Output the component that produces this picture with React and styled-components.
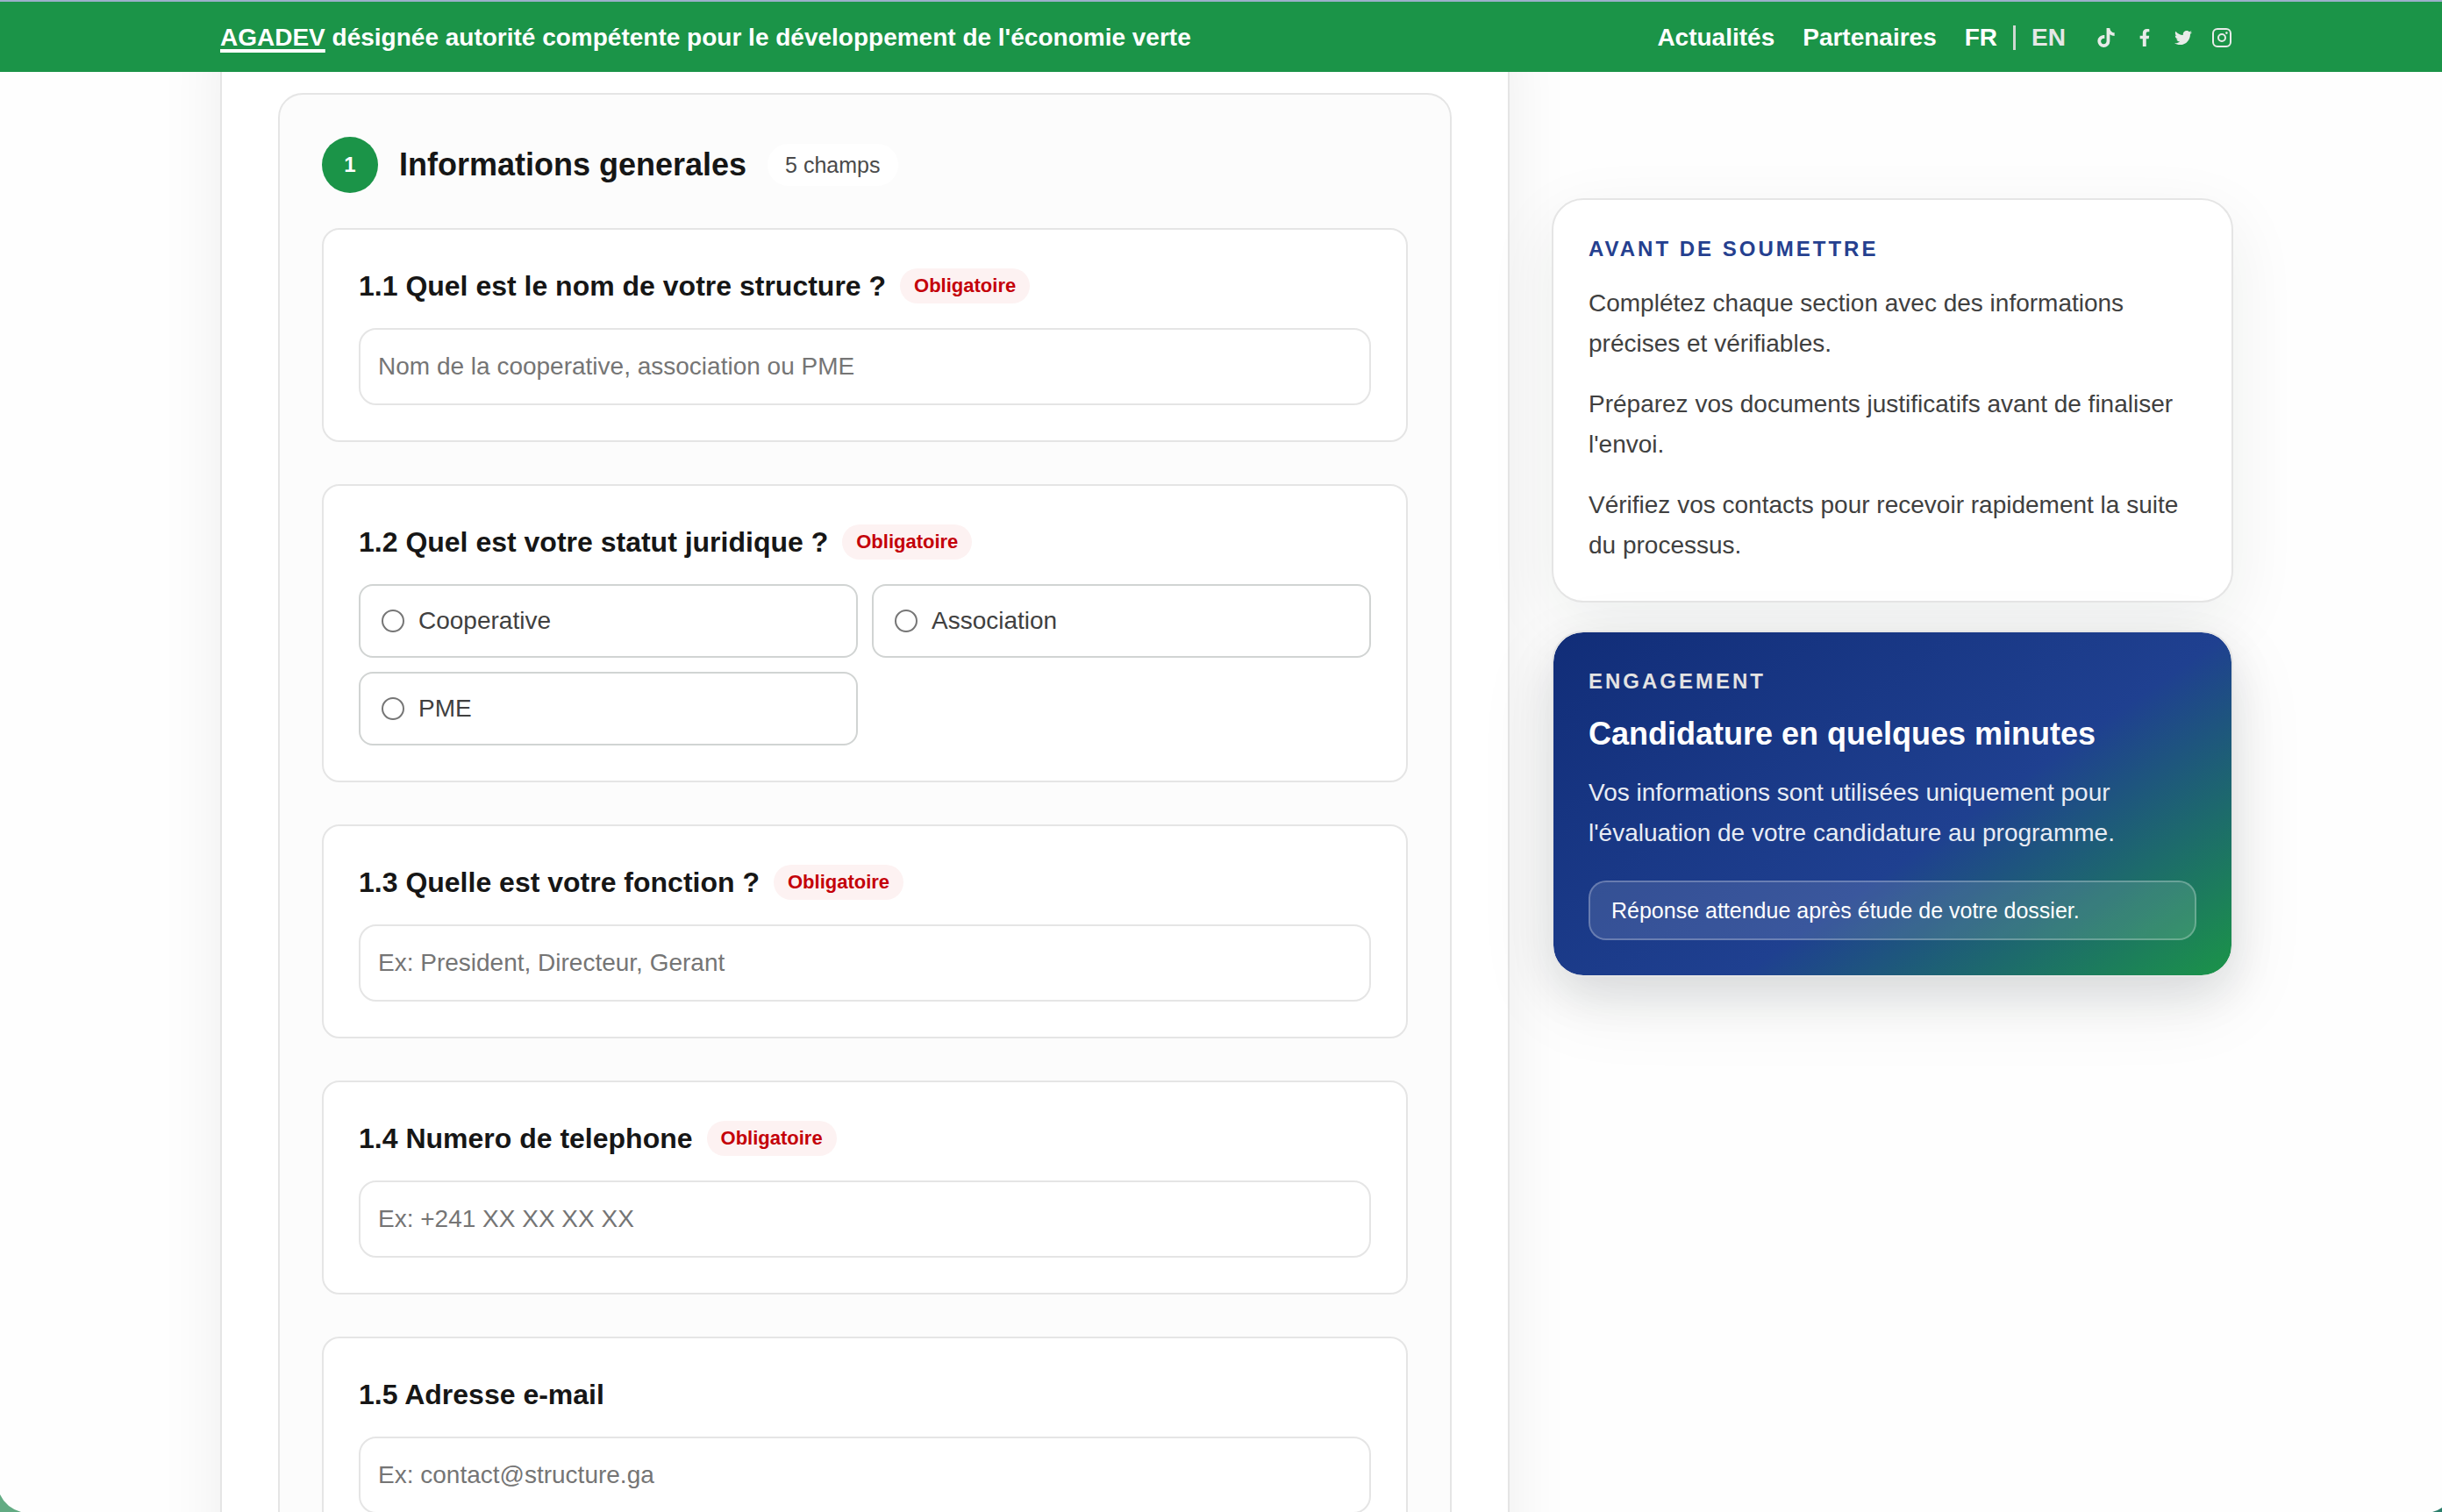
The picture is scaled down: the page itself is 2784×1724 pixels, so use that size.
import React, { useState } from 'react'
import styled, { createGlobalStyle } from 'styled-components'
import { FaTiktok, FaFacebookF, FaTwitter } from 'react-icons/fa'

const fields = [
  { id: 'structure', label: '1.1 Quel est le nom de votre structure ?', required: true, placeholder: 'Nom de la cooperative, association ou PME' },
  { id: 'statut', label: '1.2 Quel est votre statut juridique ?', required: true, options: ['Cooperative', 'Association', 'PME'] },
  { id: 'fonction', label: '1.3 Quelle est votre fonction ?', required: true, placeholder: 'Ex: President, Directeur, Gerant' },
  { id: 'telephone', label: '1.4 Numero de telephone', required: true, type: 'tel', placeholder: 'Ex: +241 XX XX XX XX' },
  { id: 'email', label: '1.5 Adresse e-mail', type: 'email', placeholder: 'Ex: contact@structure.ga' },
]

const tips = [
  'Complétez chaque section avec des informations précises et vérifiables.',
  "Préparez vos documents justificatifs avant de finaliser l'envoi.",
  'Vérifiez vos contacts pour recevoir rapidement la suite du processus.',
]

function InstagramIcon() {
  return (
    <svg width="24" height="24" viewBox="0 0 24 24" fill="none" stroke="currentColor" strokeWidth="2">
      <rect x="2" y="2" width="20" height="20" rx="5" />
      <circle cx="12" cy="12" r="4" />
      <circle cx="17.4" cy="6.6" r="1.3" fill="currentColor" stroke="none" />
    </svg>
  )
}

function Header() {
  return (
    <TopBar>
      <Slogan><a href="#agadev">AGADEV</a> désignée autorité compétente pour le développement de l'économie verte</Slogan>
      <Nav>
        <NavLink href="#actualites">Actualités</NavLink>
        <NavLink href="#partenaires">Partenaires</NavLink>
        <Langs>
          <LangButton type="button">FR</LangButton>
          <Divider />
          <LangButton type="button" $muted>EN</LangButton>
        </Langs>
        <Socials>
          <SocialLink href="#tiktok" aria-label="TikTok"><FaTiktok size={22} /></SocialLink>
          <SocialLink href="#facebook" aria-label="Facebook"><FaFacebookF size={20} /></SocialLink>
          <SocialLink href="#twitter" aria-label="Twitter"><FaTwitter size={20} /></SocialLink>
          <SocialLink href="#instagram" aria-label="Instagram"><InstagramIcon /></SocialLink>
        </Socials>
      </Nav>
    </TopBar>
  )
}

function Field({ field, value, onChange }) {
  const badge = field.required && <Badge>Obligatoire</Badge>

  if (field.options) {
    return (
      <FieldCard role="radiogroup" aria-labelledby={field.id}>
        <LabelRow><Label as="span" id={field.id}>{field.label}</Label>{badge}</LabelRow>
        <Options>
          {field.options.map((option) => (
            <Option key={option}>
              <Radio
                type="radio"
                name={field.id}
                checked={value === option}
                onChange={() => onChange(option)}
              />
              {option}
            </Option>
          ))}
        </Options>
      </FieldCard>
    )
  }

  return (
    <FieldCard>
      <LabelRow><Label htmlFor={field.id}>{field.label}</Label>{badge}</LabelRow>
      <TextInput
        id={field.id}
        type={field.type || 'text'}
        placeholder={field.placeholder}
        value={value}
        onChange={(e) => onChange(e.target.value)}
      />
    </FieldCard>
  )
}

function App() {
  const [values, setValues] = useState({})

  return (
    <Shell>
      <GlobalStyle />
      <Header />
      <Content>
        <FormCard>
          <Section>
            <SectionHead>
              <Step>1</Step>
              <SectionTitle>Informations generales</SectionTitle>
              <Count>5 champs</Count>
            </SectionHead>
            <FieldList>
              {fields.map((field) => (
                <Field
                  key={field.id}
                  field={field}
                  value={values[field.id] || ''}
                  onChange={(value) => setValues({ ...values, [field.id]: value })}
                />
              ))}
            </FieldList>
          </Section>
        </FormCard>
        <Sidebar>
          <TipsCard>
            <Eyebrow>Avant de soumettre</Eyebrow>
            {tips.map((tip) => <Text key={tip}>{tip}</Text>)}
          </TipsCard>
          <PromoCard>
            <Eyebrow $light>Engagement</Eyebrow>
            <PromoTitle>Candidature en quelques minutes</PromoTitle>
            <Text $light>Vos informations sont utilisées uniquement pour l'évaluation de votre candidature au programme.</Text>
            <Notice>Réponse attendue après étude de votre dossier.</Notice>
          </PromoCard>
        </Sidebar>
      </Content>
      <Corner $side="left" width="24" height="20" viewBox="0 0 24 20">
        <path d="M0 0Q7 15 24 20H0Z" fill="#62ab83" />
      </Corner>
      <Corner $side="right" width="11" height="5" viewBox="0 0 11 5">
        <path d="M11 0Q7 3 0 5H11Z" fill="#2a7d6a" />
      </Corner>
    </Shell>
  )
}

const GlobalStyle = createGlobalStyle`
* { box-sizing: border-box; }
body {
  margin: 0;
  background: #fefefe;
  color: #161616;
  font-family: "Liberation Sans", Arial, sans-serif;
  font-size: 28px;
}
h2, h3, p { margin: 0; }
a { color: inherit; }
button, input { font: inherit; color: inherit; }
`

const Shell = styled.div`
  height: 100vh;
  overflow: hidden;
`

const TopBar = styled.header`
  position: sticky;
  top: 0;
  z-index: 2;
  display: flex;
  align-items: center;
  justify-content: space-between;
  height: 82px;
  padding: 2px 237px 0 251px;
  border-top: 2px solid #9cafca;
  background: #1b9448;
  color: #fff;
  font-weight: 700;
`

const Slogan = styled.p`
  a {
    text-decoration-thickness: 4px;
    text-underline-offset: 4px;
    text-decoration-skip-ink: none;
  }
`

const Nav = styled.nav`
  display: flex;
  align-items: center;
  gap: 32px;
`

const NavLink = styled.a`
  text-decoration: none;
`

const Langs = styled.div`
  display: flex;
  align-items: center;
  gap: 18px;
`

const LangButton = styled.button`
  padding: 0;
  border: 0;
  background: none;
  cursor: pointer;
  color: ${(p) => (p.$muted ? '#e5e7e6' : '#fff')};
`

const Divider = styled.span`
  width: 3px;
  height: 28px;
  background: #cfd8d2;
`

const Socials = styled.div`
  display: flex;
  gap: 16px;
`

const SocialLink = styled.a`
  display: flex;
  align-items: center;
  justify-content: center;
  width: 28px;
  height: 28px;
  color: #e8ebe9;
`

const Content = styled.div`
  display: grid;
  grid-template-columns: minmax(0, 1fr) 777px;
  gap: 48px;
  padding: 0 238px 0 251px;
`

/* slides under the top bar */
const FormCard = styled.form`
  margin-top: -80px;
  padding: 104px 64px 64px;
  border: 2px solid #e5e5e5;
  border-top: 0;
  background: #fff;
  box-shadow: 0 24px 70px rgba(0, 0, 0, 0.07);
`

const Section = styled.section`
  padding: 48px;
  border: 2px solid #e5e5e5;
  border-radius: 28px;
  background: #fcfcfc;
`

const SectionHead = styled.div`
  display: flex;
  align-items: center;
  gap: 24px;
  margin-bottom: 40px;
`

const Step = styled.span`
  display: flex;
  align-items: center;
  justify-content: center;
  width: 64px;
  height: 64px;
  border-radius: 50%;
  background: #1b9448;
  color: #fff;
  font-size: 24px;
  font-weight: 700;
`

const SectionTitle = styled.h2`
  font-size: 36px;
  line-height: 48px;
`

const Count = styled.span`
  padding: 0 20px;
  border-radius: 24px;
  background: #fff;
  color: #4a4a4a;
  font-size: 25px;
  line-height: 48px;
`

const FieldList = styled.div`
  display: grid;
  gap: 48px;
`

const FieldCard = styled.div`
  padding: 40px;
  border: 2px solid #e5e5e5;
  border-radius: 20px;
  background: #fff;
`

const LabelRow = styled.div`
  display: flex;
  align-items: center;
  gap: 16px;
  height: 48px;
  margin-bottom: 24px;
`

const Label = styled.label`
  font-size: 32px;
  font-weight: 700;
`

const Badge = styled.span`
  padding: 0 16px;
  border-radius: 20px;
  background: #fdf2f2;
  color: #c40009;
  font-size: 22px;
  font-weight: 700;
  line-height: 40px;
`

const TextInput = styled.input`
  display: block;
  width: 100%;
  height: 88px;
  padding: 0 20px;
  border: 2px solid #e5e5e5;
  border-radius: 20px;
  background: #fff;
  outline: none;

  &::placeholder {
    color: #757575;
  }
`

const Options = styled.div`
  display: grid;
  grid-template-columns: 1fr 1fr;
  gap: 16px;
`

const Option = styled.label`
  display: flex;
  align-items: center;
  gap: 16px;
  height: 84px;
  padding: 0 24px;
  border: 2px solid #d1d4d3;
  border-radius: 16px;
  color: #404040;
  cursor: pointer;
`

const Radio = styled.input`
  appearance: none;
  width: 26px;
  height: 26px;
  margin: 0;
  border: 2px solid #767676;
  border-radius: 50%;
  background: #fff;

  &:checked {
    border: 8px solid #1b9448;
  }
`

const Sidebar = styled.aside`
  display: flex;
  flex-direction: column;
  gap: 32px;
  padding-top: 144px;
`

const TipsCard = styled.section`
  display: grid;
  gap: 23px;
  padding: 40px;
  border: 2px solid #e5e5e5;
  border-radius: 36px;
  background: #fff;
  box-shadow: 0 24px 80px rgba(16, 40, 30, 0.07);
`

const PromoCard = styled.section`
  display: grid;
  gap: 20px;
  padding: 40px;
  border: 2px solid #e5e5e5;
  border-radius: 36px;
  background: linear-gradient(145deg, #112d78 0%, #1f4090 58%, #1b9448 100%) padding-box;
  color: #fff;
  box-shadow: 0 20px 50px rgba(15, 23, 42, 0.1), 0 28px 90px rgba(16, 40, 30, 0.08);
`

const Eyebrow = styled.p`
  color: ${(p) => (p.$light ? '#e3e3e3' : '#25408f')};
  font-size: 24px;
  font-weight: 700;
  line-height: 32px;
  letter-spacing: 3px;
  text-transform: uppercase;
`

const Text = styled.p`
  color: ${(p) => (p.$light ? '#e8ecf4' : '#404040')};
  line-height: 46px;
`

const PromoTitle = styled.h3`
  font-size: 36px;
  line-height: 48px;
`

const Notice = styled.p`
  margin-top: 11px;
  padding: 0 24px;
  border: 2px solid rgba(255, 255, 255, 0.25);
  border-radius: 20px;
  background: rgba(255, 255, 255, 0.12);
  font-size: 25px;
  line-height: 64px;
`

const Corner = styled.svg`
  position: fixed;
  bottom: 0;
  ${(p) => p.$side}: 0;
`

export default App
